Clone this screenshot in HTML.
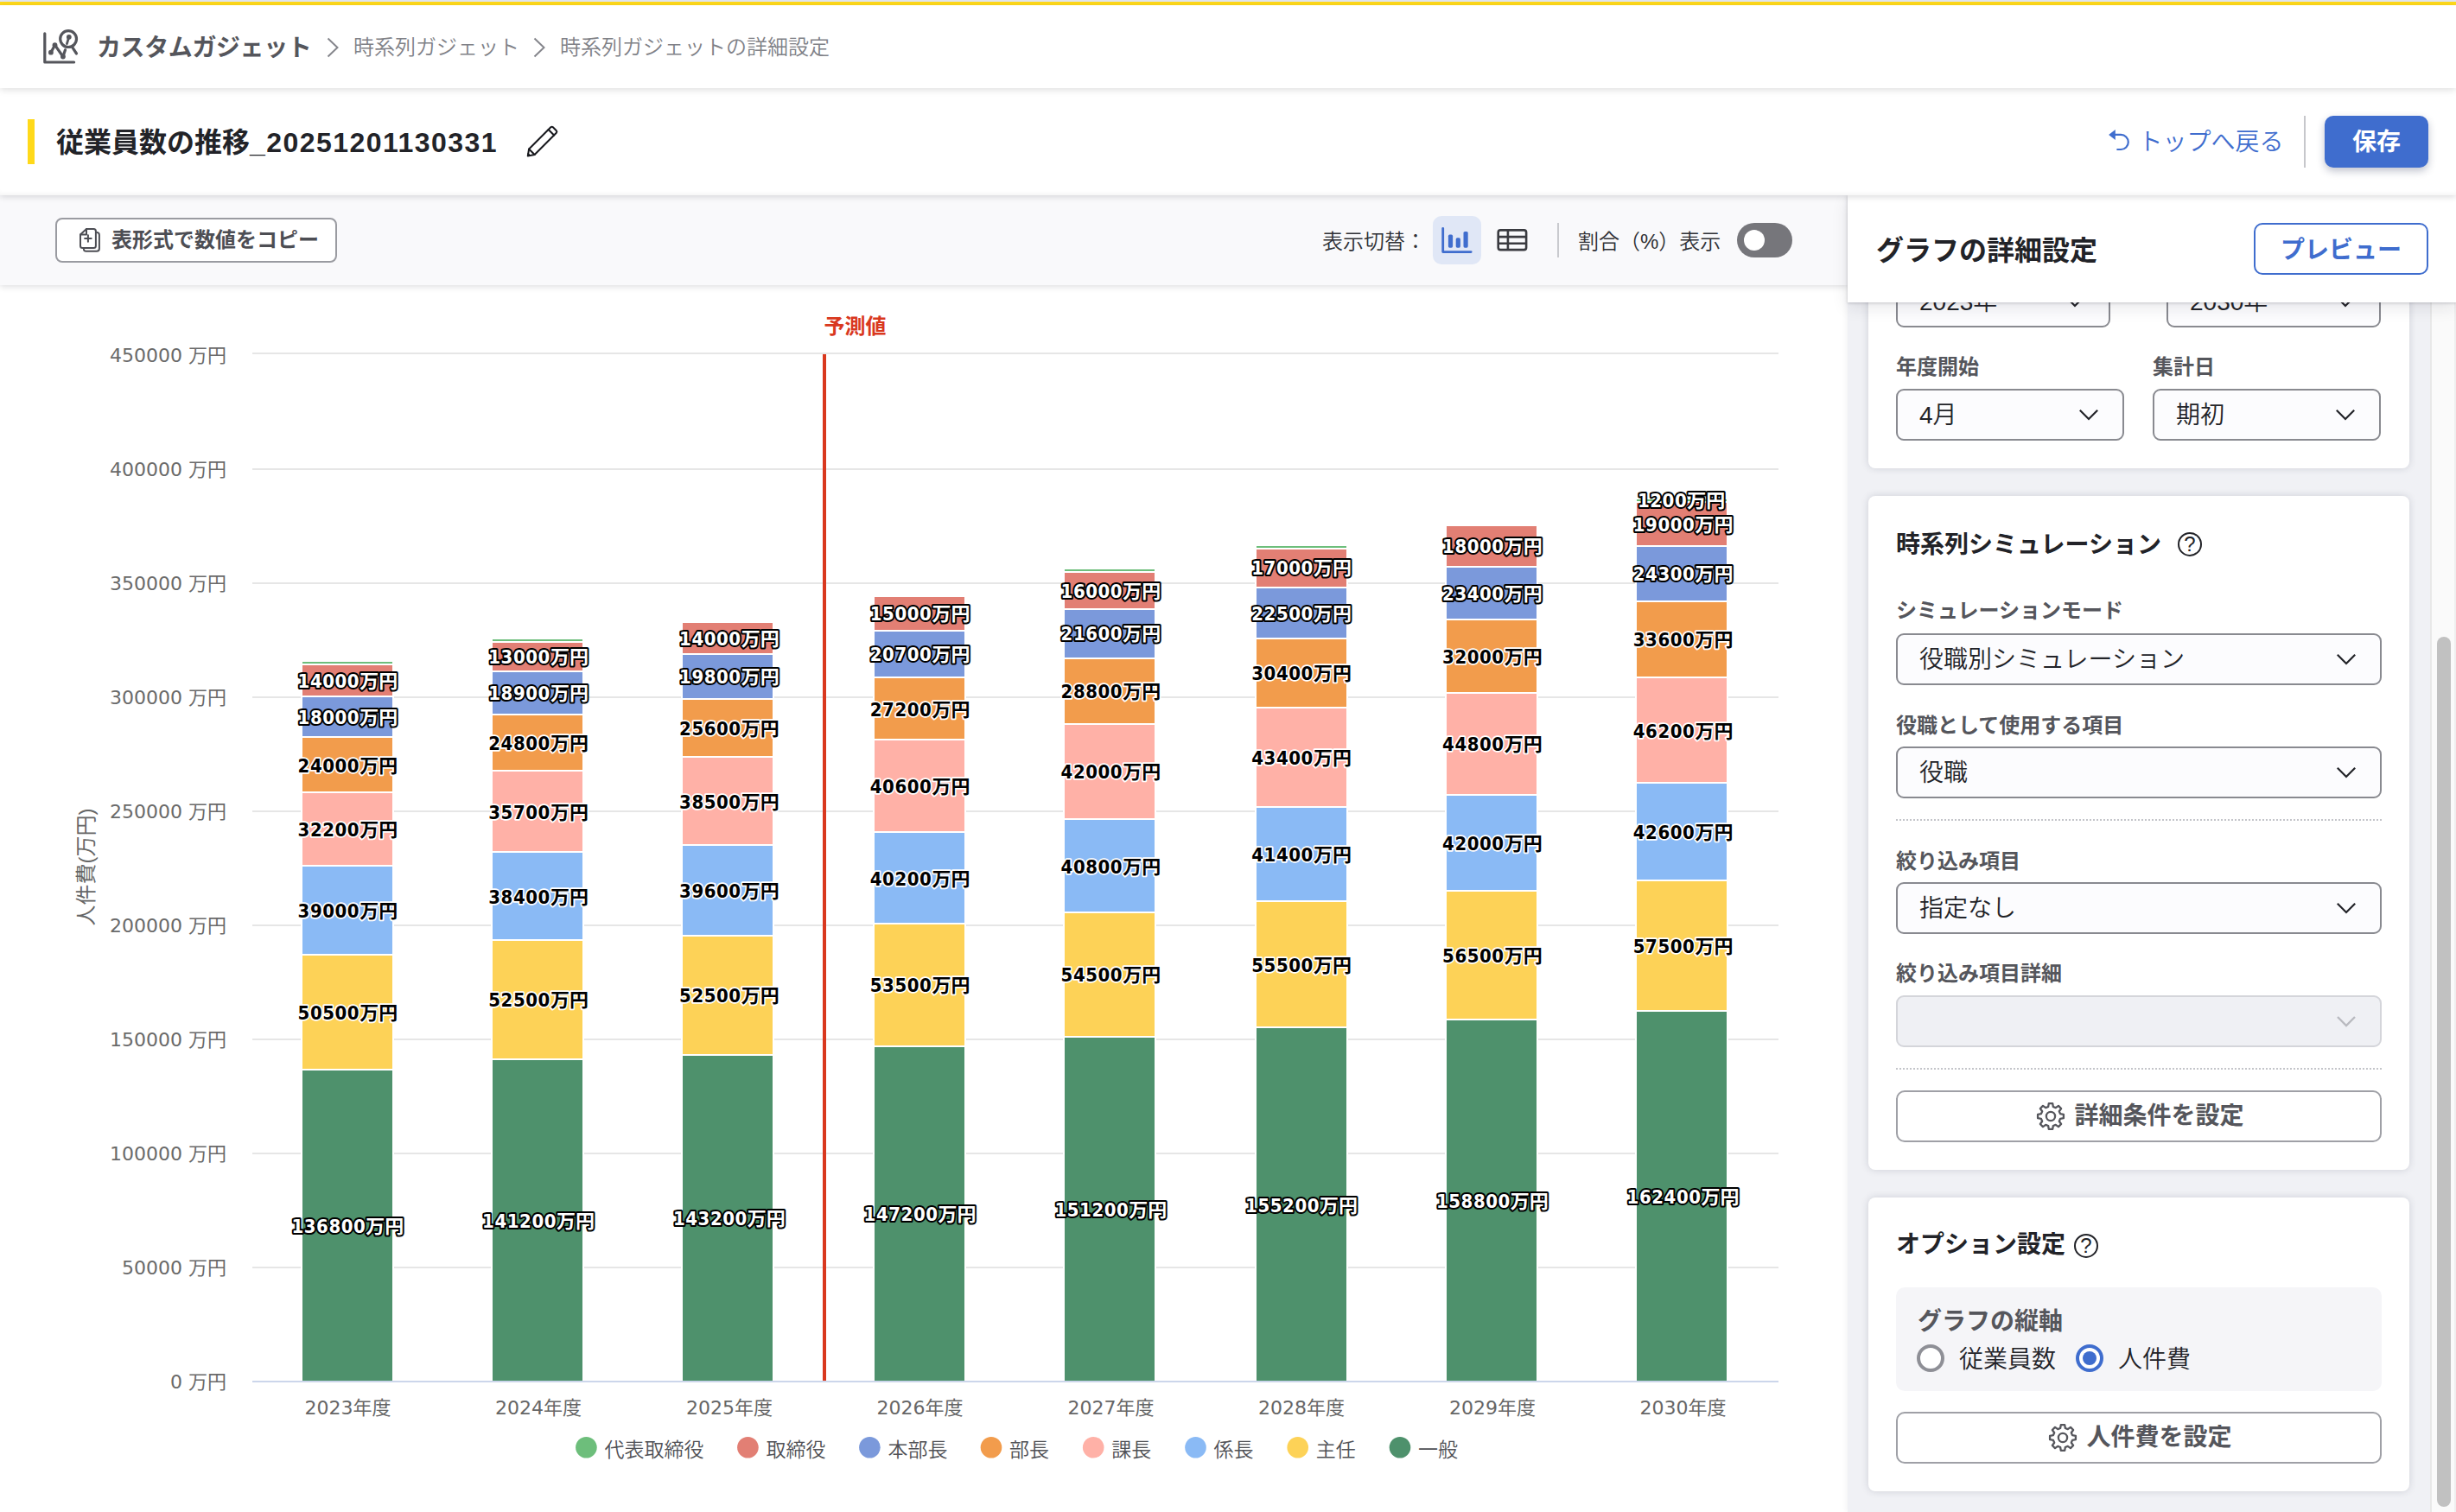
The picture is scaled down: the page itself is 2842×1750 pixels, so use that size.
<!DOCTYPE html>
<html lang="ja">
<head>
<meta charset="utf-8">
<title>カスタムガジェット - 時系列ガジェットの詳細設定</title>
<style>
*{box-sizing:border-box;margin:0;padding:0}
html,body{width:2842px;height:1750px;overflow:hidden;background:#fff}
body{position:relative;font-family:"Liberation Sans","Noto Sans CJK JP",sans-serif;color:#222328;-webkit-font-smoothing:antialiased}
.abs{position:absolute}
.t{position:absolute;white-space:nowrap;line-height:1}
/* top bars */
#top0{left:0;top:0;width:2842px;height:2px;background:#e1e5ed}
#top1{left:0;top:2px;width:2842px;height:4px;background:#ffd91a}
#header{left:0;top:6px;width:2842px;height:96px;background:#fff;box-shadow:0 2px 8px rgba(0,0,0,.13);z-index:30}
#titlebar{left:0;top:102px;width:2842px;height:124px;background:#fff;box-shadow:0 2px 7px rgba(10,10,20,.14),inset 0 -5px 5px -3px rgba(0,0,0,.045);z-index:20}
#toolbar{left:0;top:226px;width:2138px;height:104px;background:#f9f9fb;box-shadow:0 2px 7px rgba(10,10,20,.13);z-index:10}
#chart{left:0;top:330px;width:2138px;height:1420px;background:#fff;z-index:1}
#panel{left:2138px;top:226px;width:704px;height:1524px;background:#f0f1f5;z-index:12;box-shadow:-2px 0 5px rgba(30,30,50,.05)}
#phead{left:0;top:0;width:704px;height:124px;background:#fff;box-shadow:0 1px 3px rgba(30,30,50,.20),0 6px 18px rgba(30,30,50,.10);z-index:5}
.bc1{font-size:28px;font-weight:700;color:#55565c}
.bc2{font-size:24px;font-weight:350;color:#808187}
.title{font-size:32px;font-weight:700;color:#222328}
.card{position:absolute;left:24px;width:626px;background:#fff;border-radius:8px;box-shadow:0 0 8px rgba(40,45,70,.17)}
.lbl{font-size:24px;font-weight:700;color:#55565c}
.sel{position:absolute;height:60px;border:2px solid #898a90;border-radius:9px;background:#fcfcfe}
.sel .v{position:absolute;left:25px;top:15px;font-size:28px;line-height:1;white-space:nowrap;color:#222328;font-weight:350}
.sel svg{position:absolute;right:27px;top:21px}
.sel.dis{background:#eff0f4;border-color:#d4d5da}
.btn{position:absolute;height:60px;border:2px solid #9fa0a6;border-radius:10px;background:#fff}
.btn .v{position:absolute;font-size:28px;line-height:1;white-space:nowrap;color:#55565c;font-weight:700}
.dot{position:absolute;height:0;border-top:2px dotted #c4c5ca}
.h2{font-size:28px;font-weight:700;color:#222328}
</style>
</head>
<body>
<div id="top0" class="abs"></div>
<div id="top1" class="abs"></div>

<div id="header" class="abs">
  <svg class="abs" style="left:40px;top:20px" width="60" height="60" viewBox="40 26 60 60" fill="none" stroke="#55565c" stroke-width="3.2" stroke-linecap="round" stroke-linejoin="round">
    <path d="M51.8 38.8V72H85.6"/>
    <path d="M58.9 60.7L63.5 52.2L72.9 65.5L75.5 57.8"/>
    <circle cx="58.9" cy="60.7" r="2.9" fill="#55565c" stroke="none"/>
    <circle cx="63.5" cy="52.2" r="2.9" fill="#55565c" stroke="none"/>
    <circle cx="72.9" cy="65.5" r="2.9" fill="#55565c" stroke="none"/>
    <circle cx="79.1" cy="45.1" r="9.4"/>
    <path d="M84 55.2L88.5 62"/>
    <circle cx="79.8" cy="42.8" r="2.9" fill="#55565c" stroke="none"/>
    <path d="M79.4 44L77.4 50.6" stroke-width="2.8"/>
  </svg>
  <div class="t bc1" style="left:112px;top:36px;letter-spacing:-.4px">カスタムガジェット</div>
  <svg class="abs" style="left:376px;top:36px" width="18" height="26" viewBox="0 0 18 26" fill="none" stroke="#85868c" stroke-width="2"><path d="M3.5 2.5L14.5 13L3.5 23.5"/></svg>
  <div class="t bc2" style="left:409px;top:37px">時系列ガジェット</div>
  <svg class="abs" style="left:615px;top:36px" width="18" height="26" viewBox="0 0 18 26" fill="none" stroke="#85868c" stroke-width="2"><path d="M3.5 2.5L14.5 13L3.5 23.5"/></svg>
  <div class="t bc2" style="left:648px;top:37px">時系列ガジェットの詳細設定</div>
</div>

<div id="titlebar" class="abs">
  <div class="abs" style="left:32px;top:36px;width:8px;height:52px;background:#ffd91a"></div>
  <div class="t title" style="left:65px;top:47px">従業員数の推移<span style="letter-spacing:1.45px">_20251201130331</span></div>
  <svg class="abs" style="left:604px;top:40px" width="48" height="48" viewBox="604 142 48 48" fill="none" stroke="#17181d" stroke-width="2" stroke-linejoin="round" stroke-linecap="round">
    <path d="M612.100 172.500L637.300 147.300Q638.600 146.100 639.900 147.300L643.800 151.200Q645 152.500 643.800 153.800L618.600 179L610.800 180.500Z"/>
    <path d="M634.600 150L641.100 156.500"/>
    <path d="M612.100 172.500L618.600 179"/>
    <path d="M611.300 177.500L613.800 180L610.800 180.500Z" fill="#17181d" stroke-width="1"/>
  </svg>
  <svg class="abs" style="left:2436px;top:44px" width="32" height="32" viewBox="2436 146 32 32" fill="none" stroke="#3f6dce" stroke-width="2.200" stroke-linecap="butt">
    <path d="M2446 155.900H2454.250A8.550 8.550 0 0 1 2454.250 173H2449.400"/>
    <path d="M2440.100 155.900L2447.800 149.900V161.900Z" fill="#3f6dce" stroke="none"/>
  </svg>
  <div class="t" style="left:2474.600px;top:49px;font-size:28px;color:#3f6dce;font-weight:350;line-height:1">トップへ戻る</div>
  <div class="abs" style="left:2666px;top:32px;width:2px;height:60px;background:#c6c7cb"></div>
  <div class="abs" style="left:2690px;top:32px;width:120px;height:60px;background:#3f6dce;border-radius:10px;box-shadow:0 4px 10px rgba(30,40,80,.28)"></div>
  <div class="t" style="left:2722px;top:49px;font-size:28px;color:#fff;font-weight:700">保存</div>
</div>

<div id="toolbar" class="abs">
  <div class="btn" style="left:64px;top:26px;width:326px;height:52px;border-color:#9a9ba1;border-radius:8px">
    <svg class="abs" style="left:22px;top:6px" width="36" height="36" viewBox="88 260 36 36" fill="none" stroke="#4d4e54" stroke-width="2" stroke-linejoin="round" stroke-linecap="round">
      <path d="M100 265.100H108.400Q110.900 265.100 110.900 267.600V284.400Q110.900 286.900 108.400 286.900H95.500Q93 286.900 93 284.400V271.500Z"/>
      <path d="M100 265.100V271.500H93"/>
      <path d="M101.900 272.200V279.800M98.100 276H105.700"/>
      <path d="M112.300 269Q114.900 269.300 114.900 272V287.800Q114.900 290.800 111.900 290.800H99.500Q97.200 290.800 96.900 288.600"/>
    </svg>
    <div class="v" style="left:63px;top:12px;font-size:24px;color:#4d4e54">表形式で数値をコピー</div>
  </div>
  <div class="t" style="left:1530px;top:42px;font-size:24px;font-weight:350;color:#303136">表示切替：</div>
  <div class="abs" style="left:1658px;top:24px;width:56px;height:56px;border-radius:10px;background:#e0e7f6"></div>
  <svg class="abs" style="left:1664px;top:30px" width="44" height="44" viewBox="1664 256 44 44" fill="none" stroke="#3f6dce" stroke-width="2.800" stroke-linecap="round" stroke-linejoin="round">
    <path d="M1669.700 264.300V291.600H1702.200"/>
    <rect x="1675.900" y="271.600" width="5.200" height="15.100" rx="1.600" fill="#3f6dce" stroke="none"/>
    <rect x="1684.700" y="275.300" width="5.200" height="11.400" rx="1.600" fill="#3f6dce" stroke="none"/>
    <rect x="1693.500" y="267.900" width="5.200" height="18.800" rx="1.600" fill="#3f6dce" stroke="none"/>
  </svg>
  <svg class="abs" style="left:1726px;top:30px" width="48" height="44" viewBox="1726 256 48 44" fill="none" stroke="#3a3b40" stroke-width="2.600" stroke-linejoin="round">
    <rect x="1733.700" y="266.400" width="32.400" height="22.700" rx="2.600"/>
    <path d="M1733.700 274.100H1766.100M1733.700 281.700H1766.100M1744.900 266.400V289.100"/>
  </svg>
  <div class="abs" style="left:1802px;top:32px;width:2px;height:40px;background:#c9cace"></div>
  <div class="t" style="left:1826px;top:42px;font-size:24px;font-weight:350;color:#303136">割合（%）表示</div>
  <div class="abs" style="left:2010px;top:32px;width:64px;height:40px;border-radius:20px;background:#76767b"></div>
  <div class="abs" style="left:2018px;top:40px;width:24px;height:24px;border-radius:12px;background:#fff"></div>
</div>
<div id="chart" class="abs">
<svg class="abs" style="left:0;top:0" width="2138" height="1420" viewBox="0 330 2138 1420" font-family="DejaVu Sans, Noto Sans CJK JP, sans-serif">
<rect x="292" y="408" width="1766" height="2" fill="#e6e6e6"/>
<rect x="292" y="542" width="1766" height="2" fill="#e6e6e6"/>
<rect x="292" y="674" width="1766" height="2" fill="#e6e6e6"/>
<rect x="292" y="806" width="1766" height="2" fill="#e6e6e6"/>
<rect x="292" y="938" width="1766" height="2" fill="#e6e6e6"/>
<rect x="292" y="1070" width="1766" height="2" fill="#e6e6e6"/>
<rect x="292" y="1202" width="1766" height="2" fill="#e6e6e6"/>
<rect x="292" y="1334" width="1766" height="2" fill="#e6e6e6"/>
<rect x="292" y="1466" width="1766" height="2" fill="#e6e6e6"/>
<text x="262" y="1607.4" text-anchor="end" font-size="22" fill="#6a6a6a">0 万円</text>
<text x="262" y="1475.4" text-anchor="end" font-size="22" fill="#6a6a6a">50000 万円</text>
<text x="262" y="1343.4" text-anchor="end" font-size="22" fill="#6a6a6a">100000 万円</text>
<text x="262" y="1211.4" text-anchor="end" font-size="22" fill="#6a6a6a">150000 万円</text>
<text x="262" y="1079.4" text-anchor="end" font-size="22" fill="#6a6a6a">200000 万円</text>
<text x="262" y="947.4" text-anchor="end" font-size="22" fill="#6a6a6a">250000 万円</text>
<text x="262" y="815.4" text-anchor="end" font-size="22" fill="#6a6a6a">300000 万円</text>
<text x="262" y="683.4" text-anchor="end" font-size="22" fill="#6a6a6a">350000 万円</text>
<text x="262" y="551.4" text-anchor="end" font-size="22" fill="#6a6a6a">400000 万円</text>
<text x="262" y="419.4" text-anchor="end" font-size="22" fill="#6a6a6a">450000 万円</text>
<text transform="translate(107.500,1003.500) rotate(-90)" text-anchor="middle" font-size="24" fill="#666" font-family="Liberation Sans, Noto Sans CJK JP, sans-serif">人件費(万円)</text>
<rect x="349" y="1238" width="106" height="361" fill="#4e916c" stroke="#fff" stroke-width="2"/>
<rect x="349" y="1105" width="106" height="133" fill="#fdd257" stroke="#fff" stroke-width="2"/>
<rect x="349" y="1002" width="106" height="103" fill="#8abaf5" stroke="#fff" stroke-width="2"/>
<rect x="349" y="917" width="106" height="85" fill="#ffb1a7" stroke="#fff" stroke-width="2"/>
<rect x="349" y="853" width="106" height="64" fill="#f29c4c" stroke="#fff" stroke-width="2"/>
<rect x="349" y="806" width="106" height="47" fill="#7b99db" stroke="#fff" stroke-width="2"/>
<rect x="349" y="769" width="106" height="37" fill="#e27f74" stroke="#fff" stroke-width="2"/>
<rect x="349" y="765" width="106" height="4" fill="#6dbe7b" stroke="#fff" stroke-width="2"/>
<rect x="569" y="1226" width="106" height="373" fill="#4e916c" stroke="#fff" stroke-width="2"/>
<rect x="569" y="1088" width="106" height="138" fill="#fdd257" stroke="#fff" stroke-width="2"/>
<rect x="569" y="986" width="106" height="102" fill="#8abaf5" stroke="#fff" stroke-width="2"/>
<rect x="569" y="892" width="106" height="94" fill="#ffb1a7" stroke="#fff" stroke-width="2"/>
<rect x="569" y="827" width="106" height="65" fill="#f29c4c" stroke="#fff" stroke-width="2"/>
<rect x="569" y="777" width="106" height="50" fill="#7b99db" stroke="#fff" stroke-width="2"/>
<rect x="569" y="743" width="106" height="34" fill="#e27f74" stroke="#fff" stroke-width="2"/>
<rect x="569" y="739" width="106" height="4" fill="#6dbe7b" stroke="#fff" stroke-width="2"/>
<rect x="789" y="1221" width="106" height="378" fill="#4e916c" stroke="#fff" stroke-width="2"/>
<rect x="789" y="1083" width="106" height="138" fill="#fdd257" stroke="#fff" stroke-width="2"/>
<rect x="789" y="978" width="106" height="105" fill="#8abaf5" stroke="#fff" stroke-width="2"/>
<rect x="789" y="876" width="106" height="102" fill="#ffb1a7" stroke="#fff" stroke-width="2"/>
<rect x="789" y="809" width="106" height="67" fill="#f29c4c" stroke="#fff" stroke-width="2"/>
<rect x="789" y="757" width="106" height="52" fill="#7b99db" stroke="#fff" stroke-width="2"/>
<rect x="789" y="720" width="106" height="37" fill="#e27f74" stroke="#fff" stroke-width="2"/>
<rect x="1011" y="1211" width="106" height="388" fill="#4e916c" stroke="#fff" stroke-width="2"/>
<rect x="1011" y="1069" width="106" height="142" fill="#fdd257" stroke="#fff" stroke-width="2"/>
<rect x="1011" y="963" width="106" height="106" fill="#8abaf5" stroke="#fff" stroke-width="2"/>
<rect x="1011" y="856" width="106" height="107" fill="#ffb1a7" stroke="#fff" stroke-width="2"/>
<rect x="1011" y="784" width="106" height="72" fill="#f29c4c" stroke="#fff" stroke-width="2"/>
<rect x="1011" y="730" width="106" height="54" fill="#7b99db" stroke="#fff" stroke-width="2"/>
<rect x="1011" y="690" width="106" height="40" fill="#e27f74" stroke="#fff" stroke-width="2"/>
<rect x="1231" y="1200" width="106" height="399" fill="#4e916c" stroke="#fff" stroke-width="2"/>
<rect x="1231" y="1056" width="106" height="144" fill="#fdd257" stroke="#fff" stroke-width="2"/>
<rect x="1231" y="948" width="106" height="108" fill="#8abaf5" stroke="#fff" stroke-width="2"/>
<rect x="1231" y="838" width="106" height="110" fill="#ffb1a7" stroke="#fff" stroke-width="2"/>
<rect x="1231" y="762" width="106" height="76" fill="#f29c4c" stroke="#fff" stroke-width="2"/>
<rect x="1231" y="705" width="106" height="57" fill="#7b99db" stroke="#fff" stroke-width="2"/>
<rect x="1231" y="662" width="106" height="43" fill="#e27f74" stroke="#fff" stroke-width="2"/>
<rect x="1231" y="658" width="106" height="4" fill="#6dbe7b" stroke="#fff" stroke-width="2"/>
<rect x="1453" y="1189" width="106" height="410" fill="#4e916c" stroke="#fff" stroke-width="2"/>
<rect x="1453" y="1043" width="106" height="146" fill="#fdd257" stroke="#fff" stroke-width="2"/>
<rect x="1453" y="934" width="106" height="109" fill="#8abaf5" stroke="#fff" stroke-width="2"/>
<rect x="1453" y="819" width="106" height="115" fill="#ffb1a7" stroke="#fff" stroke-width="2"/>
<rect x="1453" y="739" width="106" height="80" fill="#f29c4c" stroke="#fff" stroke-width="2"/>
<rect x="1453" y="680" width="106" height="59" fill="#7b99db" stroke="#fff" stroke-width="2"/>
<rect x="1453" y="635" width="106" height="45" fill="#e27f74" stroke="#fff" stroke-width="2"/>
<rect x="1453" y="631" width="106" height="4" fill="#6dbe7b" stroke="#fff" stroke-width="2"/>
<rect x="1673" y="1180" width="106" height="419" fill="#4e916c" stroke="#fff" stroke-width="2"/>
<rect x="1673" y="1031" width="106" height="149" fill="#fdd257" stroke="#fff" stroke-width="2"/>
<rect x="1673" y="920" width="106" height="111" fill="#8abaf5" stroke="#fff" stroke-width="2"/>
<rect x="1673" y="802" width="106" height="118" fill="#ffb1a7" stroke="#fff" stroke-width="2"/>
<rect x="1673" y="717" width="106" height="85" fill="#f29c4c" stroke="#fff" stroke-width="2"/>
<rect x="1673" y="656" width="106" height="61" fill="#7b99db" stroke="#fff" stroke-width="2"/>
<rect x="1673" y="608" width="106" height="48" fill="#e27f74" stroke="#fff" stroke-width="2"/>
<rect x="1893" y="1170" width="106" height="429" fill="#4e916c" stroke="#fff" stroke-width="2"/>
<rect x="1893" y="1019" width="106" height="151" fill="#fdd257" stroke="#fff" stroke-width="2"/>
<rect x="1893" y="906" width="106" height="113" fill="#8abaf5" stroke="#fff" stroke-width="2"/>
<rect x="1893" y="784" width="106" height="122" fill="#ffb1a7" stroke="#fff" stroke-width="2"/>
<rect x="1893" y="696" width="106" height="88" fill="#f29c4c" stroke="#fff" stroke-width="2"/>
<rect x="1893" y="632" width="106" height="64" fill="#7b99db" stroke="#fff" stroke-width="2"/>
<rect x="1893" y="581" width="106" height="51" fill="#e27f74" stroke="#fff" stroke-width="2"/>
<rect x="1893" y="577" width="106" height="4" fill="#6dbe7b" stroke="#fff" stroke-width="2"/>
<rect x="292" y="1598" width="1766" height="2" fill="#ccd6eb"/>
<rect x="952.00" y="410" width="4" height="1188" fill="#d9381e"/>
<text x="953.4" y="386" font-size="24" font-weight="700" fill="#d9381e" font-family="Liberation Sans, Noto Sans CJK JP, sans-serif">予測値</text>
<text x="402.4" y="1636.500" text-anchor="middle" font-size="22" fill="#666">2023年度</text>
<text x="623.1" y="1636.500" text-anchor="middle" font-size="22" fill="#666">2024年度</text>
<text x="843.9" y="1636.500" text-anchor="middle" font-size="22" fill="#666">2025年度</text>
<text x="1064.6" y="1636.500" text-anchor="middle" font-size="22" fill="#666">2026年度</text>
<text x="1285.4" y="1636.500" text-anchor="middle" font-size="22" fill="#666">2027年度</text>
<text x="1506.1" y="1636.500" text-anchor="middle" font-size="22" fill="#666">2028年度</text>
<text x="1726.9" y="1636.500" text-anchor="middle" font-size="22" fill="#666">2029年度</text>
<text x="1947.6" y="1636.500" text-anchor="middle" font-size="22" fill="#666">2030年度</text>
<text x="402.4" y="1426.8" text-anchor="middle" font-size="22" font-weight="700" fill="#fff" stroke="#000" stroke-width="4" stroke-linejoin="round" paint-order="stroke" font-family="DejaVu Sans Condensed, DejaVu Sans, Noto Sans CJK JP, sans-serif" letter-spacing="0.55"><tspan>136800</tspan><tspan letter-spacing="0">万円</tspan></text>
<text x="402.4" y="1179.7" text-anchor="middle" font-size="22" font-weight="700" fill="#000" stroke="#fff" stroke-width="3.4" stroke-linejoin="round" paint-order="stroke" font-family="DejaVu Sans Condensed, DejaVu Sans, Noto Sans CJK JP, sans-serif" letter-spacing="0.55"><tspan>50500</tspan><tspan letter-spacing="0">万円</tspan></text>
<text x="402.4" y="1061.6" text-anchor="middle" font-size="22" font-weight="700" fill="#000" stroke="#fff" stroke-width="3.4" stroke-linejoin="round" paint-order="stroke" font-family="DejaVu Sans Condensed, DejaVu Sans, Noto Sans CJK JP, sans-serif" letter-spacing="0.55"><tspan>39000</tspan><tspan letter-spacing="0">万円</tspan></text>
<text x="402.4" y="967.6" text-anchor="middle" font-size="22" font-weight="700" fill="#000" stroke="#fff" stroke-width="3.4" stroke-linejoin="round" paint-order="stroke" font-family="DejaVu Sans Condensed, DejaVu Sans, Noto Sans CJK JP, sans-serif" letter-spacing="0.55"><tspan>32200</tspan><tspan letter-spacing="0">万円</tspan></text>
<text x="402.4" y="893.5" text-anchor="middle" font-size="22" font-weight="700" fill="#000" stroke="#fff" stroke-width="3.4" stroke-linejoin="round" paint-order="stroke" font-family="DejaVu Sans Condensed, DejaVu Sans, Noto Sans CJK JP, sans-serif" letter-spacing="0.55"><tspan>24000</tspan><tspan letter-spacing="0">万円</tspan></text>
<text x="402.4" y="838.0" text-anchor="middle" font-size="22" font-weight="700" fill="#fff" stroke="#000" stroke-width="4" stroke-linejoin="round" paint-order="stroke" font-family="DejaVu Sans Condensed, DejaVu Sans, Noto Sans CJK JP, sans-serif" letter-spacing="0.55"><tspan>18000</tspan><tspan letter-spacing="0">万円</tspan></text>
<text x="402.4" y="795.8" text-anchor="middle" font-size="22" font-weight="700" fill="#fff" stroke="#000" stroke-width="4" stroke-linejoin="round" paint-order="stroke" font-family="DejaVu Sans Condensed, DejaVu Sans, Noto Sans CJK JP, sans-serif" letter-spacing="0.55"><tspan>14000</tspan><tspan letter-spacing="0">万円</tspan></text>
<text x="623.1" y="1421.0" text-anchor="middle" font-size="22" font-weight="700" fill="#fff" stroke="#000" stroke-width="4" stroke-linejoin="round" paint-order="stroke" font-family="DejaVu Sans Condensed, DejaVu Sans, Noto Sans CJK JP, sans-serif" letter-spacing="0.55"><tspan>141200</tspan><tspan letter-spacing="0">万円</tspan></text>
<text x="623.1" y="1165.4" text-anchor="middle" font-size="22" font-weight="700" fill="#000" stroke="#fff" stroke-width="3.4" stroke-linejoin="round" paint-order="stroke" font-family="DejaVu Sans Condensed, DejaVu Sans, Noto Sans CJK JP, sans-serif" letter-spacing="0.55"><tspan>52500</tspan><tspan letter-spacing="0">万円</tspan></text>
<text x="623.1" y="1045.5" text-anchor="middle" font-size="22" font-weight="700" fill="#000" stroke="#fff" stroke-width="3.4" stroke-linejoin="round" paint-order="stroke" font-family="DejaVu Sans Condensed, DejaVu Sans, Noto Sans CJK JP, sans-serif" letter-spacing="0.55"><tspan>38400</tspan><tspan letter-spacing="0">万円</tspan></text>
<text x="623.1" y="947.7" text-anchor="middle" font-size="22" font-weight="700" fill="#000" stroke="#fff" stroke-width="3.4" stroke-linejoin="round" paint-order="stroke" font-family="DejaVu Sans Condensed, DejaVu Sans, Noto Sans CJK JP, sans-serif" letter-spacing="0.55"><tspan>35700</tspan><tspan letter-spacing="0">万円</tspan></text>
<text x="623.1" y="867.9" text-anchor="middle" font-size="22" font-weight="700" fill="#000" stroke="#fff" stroke-width="3.4" stroke-linejoin="round" paint-order="stroke" font-family="DejaVu Sans Condensed, DejaVu Sans, Noto Sans CJK JP, sans-serif" letter-spacing="0.55"><tspan>24800</tspan><tspan letter-spacing="0">万円</tspan></text>
<text x="623.1" y="810.2" text-anchor="middle" font-size="22" font-weight="700" fill="#fff" stroke="#000" stroke-width="4" stroke-linejoin="round" paint-order="stroke" font-family="DejaVu Sans Condensed, DejaVu Sans, Noto Sans CJK JP, sans-serif" letter-spacing="0.55"><tspan>18900</tspan><tspan letter-spacing="0">万円</tspan></text>
<text x="623.1" y="768.1" text-anchor="middle" font-size="22" font-weight="700" fill="#fff" stroke="#000" stroke-width="4" stroke-linejoin="round" paint-order="stroke" font-family="DejaVu Sans Condensed, DejaVu Sans, Noto Sans CJK JP, sans-serif" letter-spacing="0.55"><tspan>13000</tspan><tspan letter-spacing="0">万円</tspan></text>
<text x="843.9" y="1418.3" text-anchor="middle" font-size="22" font-weight="700" fill="#fff" stroke="#000" stroke-width="4" stroke-linejoin="round" paint-order="stroke" font-family="DejaVu Sans Condensed, DejaVu Sans, Noto Sans CJK JP, sans-serif" letter-spacing="0.55"><tspan>143200</tspan><tspan letter-spacing="0">万円</tspan></text>
<text x="843.9" y="1160.1" text-anchor="middle" font-size="22" font-weight="700" fill="#000" stroke="#fff" stroke-width="3.4" stroke-linejoin="round" paint-order="stroke" font-family="DejaVu Sans Condensed, DejaVu Sans, Noto Sans CJK JP, sans-serif" letter-spacing="0.55"><tspan>52500</tspan><tspan letter-spacing="0">万円</tspan></text>
<text x="843.9" y="1038.6" text-anchor="middle" font-size="22" font-weight="700" fill="#000" stroke="#fff" stroke-width="3.4" stroke-linejoin="round" paint-order="stroke" font-family="DejaVu Sans Condensed, DejaVu Sans, Noto Sans CJK JP, sans-serif" letter-spacing="0.55"><tspan>39600</tspan><tspan letter-spacing="0">万円</tspan></text>
<text x="843.9" y="935.5" text-anchor="middle" font-size="22" font-weight="700" fill="#000" stroke="#fff" stroke-width="3.4" stroke-linejoin="round" paint-order="stroke" font-family="DejaVu Sans Condensed, DejaVu Sans, Noto Sans CJK JP, sans-serif" letter-spacing="0.55"><tspan>38500</tspan><tspan letter-spacing="0">万円</tspan></text>
<text x="843.9" y="851.0" text-anchor="middle" font-size="22" font-weight="700" fill="#000" stroke="#fff" stroke-width="3.4" stroke-linejoin="round" paint-order="stroke" font-family="DejaVu Sans Condensed, DejaVu Sans, Noto Sans CJK JP, sans-serif" letter-spacing="0.55"><tspan>25600</tspan><tspan letter-spacing="0">万円</tspan></text>
<text x="843.9" y="791.1" text-anchor="middle" font-size="22" font-weight="700" fill="#fff" stroke="#000" stroke-width="4" stroke-linejoin="round" paint-order="stroke" font-family="DejaVu Sans Condensed, DejaVu Sans, Noto Sans CJK JP, sans-serif" letter-spacing="0.55"><tspan>19800</tspan><tspan letter-spacing="0">万円</tspan></text>
<text x="843.9" y="746.5" text-anchor="middle" font-size="22" font-weight="700" fill="#fff" stroke="#000" stroke-width="4" stroke-linejoin="round" paint-order="stroke" font-family="DejaVu Sans Condensed, DejaVu Sans, Noto Sans CJK JP, sans-serif" letter-spacing="0.55"><tspan>14000</tspan><tspan letter-spacing="0">万円</tspan></text>
<text x="1064.6" y="1413.1" text-anchor="middle" font-size="22" font-weight="700" fill="#fff" stroke="#000" stroke-width="4" stroke-linejoin="round" paint-order="stroke" font-family="DejaVu Sans Condensed, DejaVu Sans, Noto Sans CJK JP, sans-serif" letter-spacing="0.55"><tspan>147200</tspan><tspan letter-spacing="0">万円</tspan></text>
<text x="1064.6" y="1148.2" text-anchor="middle" font-size="22" font-weight="700" fill="#000" stroke="#fff" stroke-width="3.4" stroke-linejoin="round" paint-order="stroke" font-family="DejaVu Sans Condensed, DejaVu Sans, Noto Sans CJK JP, sans-serif" letter-spacing="0.55"><tspan>53500</tspan><tspan letter-spacing="0">万円</tspan></text>
<text x="1064.6" y="1024.6" text-anchor="middle" font-size="22" font-weight="700" fill="#000" stroke="#fff" stroke-width="3.4" stroke-linejoin="round" paint-order="stroke" font-family="DejaVu Sans Condensed, DejaVu Sans, Noto Sans CJK JP, sans-serif" letter-spacing="0.55"><tspan>40200</tspan><tspan letter-spacing="0">万円</tspan></text>
<text x="1064.6" y="918.0" text-anchor="middle" font-size="22" font-weight="700" fill="#000" stroke="#fff" stroke-width="3.4" stroke-linejoin="round" paint-order="stroke" font-family="DejaVu Sans Condensed, DejaVu Sans, Noto Sans CJK JP, sans-serif" letter-spacing="0.55"><tspan>40600</tspan><tspan letter-spacing="0">万円</tspan></text>
<text x="1064.6" y="828.5" text-anchor="middle" font-size="22" font-weight="700" fill="#000" stroke="#fff" stroke-width="3.4" stroke-linejoin="round" paint-order="stroke" font-family="DejaVu Sans Condensed, DejaVu Sans, Noto Sans CJK JP, sans-serif" letter-spacing="0.55"><tspan>27200</tspan><tspan letter-spacing="0">万円</tspan></text>
<text x="1064.6" y="765.3" text-anchor="middle" font-size="22" font-weight="700" fill="#fff" stroke="#000" stroke-width="4" stroke-linejoin="round" paint-order="stroke" font-family="DejaVu Sans Condensed, DejaVu Sans, Noto Sans CJK JP, sans-serif" letter-spacing="0.55"><tspan>20700</tspan><tspan letter-spacing="0">万円</tspan></text>
<text x="1064.6" y="718.2" text-anchor="middle" font-size="22" font-weight="700" fill="#fff" stroke="#000" stroke-width="4" stroke-linejoin="round" paint-order="stroke" font-family="DejaVu Sans Condensed, DejaVu Sans, Noto Sans CJK JP, sans-serif" letter-spacing="0.55"><tspan>15000</tspan><tspan letter-spacing="0">万円</tspan></text>
<text x="1285.4" y="1407.8" text-anchor="middle" font-size="22" font-weight="700" fill="#fff" stroke="#000" stroke-width="4" stroke-linejoin="round" paint-order="stroke" font-family="DejaVu Sans Condensed, DejaVu Sans, Noto Sans CJK JP, sans-serif" letter-spacing="0.55"><tspan>151200</tspan><tspan letter-spacing="0">万円</tspan></text>
<text x="1285.4" y="1136.4" text-anchor="middle" font-size="22" font-weight="700" fill="#000" stroke="#fff" stroke-width="3.4" stroke-linejoin="round" paint-order="stroke" font-family="DejaVu Sans Condensed, DejaVu Sans, Noto Sans CJK JP, sans-serif" letter-spacing="0.55"><tspan>54500</tspan><tspan letter-spacing="0">万円</tspan></text>
<text x="1285.4" y="1010.6" text-anchor="middle" font-size="22" font-weight="700" fill="#000" stroke="#fff" stroke-width="3.4" stroke-linejoin="round" paint-order="stroke" font-family="DejaVu Sans Condensed, DejaVu Sans, Noto Sans CJK JP, sans-serif" letter-spacing="0.55"><tspan>40800</tspan><tspan letter-spacing="0">万円</tspan></text>
<text x="1285.4" y="901.4" text-anchor="middle" font-size="22" font-weight="700" fill="#000" stroke="#fff" stroke-width="3.4" stroke-linejoin="round" paint-order="stroke" font-family="DejaVu Sans Condensed, DejaVu Sans, Noto Sans CJK JP, sans-serif" letter-spacing="0.55"><tspan>42000</tspan><tspan letter-spacing="0">万円</tspan></text>
<text x="1285.4" y="807.9" text-anchor="middle" font-size="22" font-weight="700" fill="#000" stroke="#fff" stroke-width="3.4" stroke-linejoin="round" paint-order="stroke" font-family="DejaVu Sans Condensed, DejaVu Sans, Noto Sans CJK JP, sans-serif" letter-spacing="0.55"><tspan>28800</tspan><tspan letter-spacing="0">万円</tspan></text>
<text x="1285.4" y="741.4" text-anchor="middle" font-size="22" font-weight="700" fill="#fff" stroke="#000" stroke-width="4" stroke-linejoin="round" paint-order="stroke" font-family="DejaVu Sans Condensed, DejaVu Sans, Noto Sans CJK JP, sans-serif" letter-spacing="0.55"><tspan>21600</tspan><tspan letter-spacing="0">万円</tspan></text>
<text x="1285.4" y="691.8" text-anchor="middle" font-size="22" font-weight="700" fill="#fff" stroke="#000" stroke-width="4" stroke-linejoin="round" paint-order="stroke" font-family="DejaVu Sans Condensed, DejaVu Sans, Noto Sans CJK JP, sans-serif" letter-spacing="0.55"><tspan>16000</tspan><tspan letter-spacing="0">万円</tspan></text>
<text x="1506.1" y="1402.5" text-anchor="middle" font-size="22" font-weight="700" fill="#fff" stroke="#000" stroke-width="4" stroke-linejoin="round" paint-order="stroke" font-family="DejaVu Sans Condensed, DejaVu Sans, Noto Sans CJK JP, sans-serif" letter-spacing="0.55"><tspan>155200</tspan><tspan letter-spacing="0">万円</tspan></text>
<text x="1506.1" y="1124.5" text-anchor="middle" font-size="22" font-weight="700" fill="#000" stroke="#fff" stroke-width="3.4" stroke-linejoin="round" paint-order="stroke" font-family="DejaVu Sans Condensed, DejaVu Sans, Noto Sans CJK JP, sans-serif" letter-spacing="0.55"><tspan>55500</tspan><tspan letter-spacing="0">万円</tspan></text>
<text x="1506.1" y="996.6" text-anchor="middle" font-size="22" font-weight="700" fill="#000" stroke="#fff" stroke-width="3.4" stroke-linejoin="round" paint-order="stroke" font-family="DejaVu Sans Condensed, DejaVu Sans, Noto Sans CJK JP, sans-serif" letter-spacing="0.55"><tspan>41400</tspan><tspan letter-spacing="0">万円</tspan></text>
<text x="1506.1" y="884.7" text-anchor="middle" font-size="22" font-weight="700" fill="#000" stroke="#fff" stroke-width="3.4" stroke-linejoin="round" paint-order="stroke" font-family="DejaVu Sans Condensed, DejaVu Sans, Noto Sans CJK JP, sans-serif" letter-spacing="0.55"><tspan>43400</tspan><tspan letter-spacing="0">万円</tspan></text>
<text x="1506.1" y="787.4" text-anchor="middle" font-size="22" font-weight="700" fill="#000" stroke="#fff" stroke-width="3.4" stroke-linejoin="round" paint-order="stroke" font-family="DejaVu Sans Condensed, DejaVu Sans, Noto Sans CJK JP, sans-serif" letter-spacing="0.55"><tspan>30400</tspan><tspan letter-spacing="0">万円</tspan></text>
<text x="1506.1" y="717.6" text-anchor="middle" font-size="22" font-weight="700" fill="#fff" stroke="#000" stroke-width="4" stroke-linejoin="round" paint-order="stroke" font-family="DejaVu Sans Condensed, DejaVu Sans, Noto Sans CJK JP, sans-serif" letter-spacing="0.55"><tspan>22500</tspan><tspan letter-spacing="0">万円</tspan></text>
<text x="1506.1" y="665.4" text-anchor="middle" font-size="22" font-weight="700" fill="#fff" stroke="#000" stroke-width="4" stroke-linejoin="round" paint-order="stroke" font-family="DejaVu Sans Condensed, DejaVu Sans, Noto Sans CJK JP, sans-serif" letter-spacing="0.55"><tspan>17000</tspan><tspan letter-spacing="0">万円</tspan></text>
<text x="1726.9" y="1397.8" text-anchor="middle" font-size="22" font-weight="700" fill="#fff" stroke="#000" stroke-width="4" stroke-linejoin="round" paint-order="stroke" font-family="DejaVu Sans Condensed, DejaVu Sans, Noto Sans CJK JP, sans-serif" letter-spacing="0.55"><tspan>158800</tspan><tspan letter-spacing="0">万円</tspan></text>
<text x="1726.9" y="1113.7" text-anchor="middle" font-size="22" font-weight="700" fill="#000" stroke="#fff" stroke-width="3.4" stroke-linejoin="round" paint-order="stroke" font-family="DejaVu Sans Condensed, DejaVu Sans, Noto Sans CJK JP, sans-serif" letter-spacing="0.55"><tspan>56500</tspan><tspan letter-spacing="0">万円</tspan></text>
<text x="1726.9" y="983.7" text-anchor="middle" font-size="22" font-weight="700" fill="#000" stroke="#fff" stroke-width="3.4" stroke-linejoin="round" paint-order="stroke" font-family="DejaVu Sans Condensed, DejaVu Sans, Noto Sans CJK JP, sans-serif" letter-spacing="0.55"><tspan>42000</tspan><tspan letter-spacing="0">万円</tspan></text>
<text x="1726.9" y="869.2" text-anchor="middle" font-size="22" font-weight="700" fill="#000" stroke="#fff" stroke-width="3.4" stroke-linejoin="round" paint-order="stroke" font-family="DejaVu Sans Condensed, DejaVu Sans, Noto Sans CJK JP, sans-serif" letter-spacing="0.55"><tspan>44800</tspan><tspan letter-spacing="0">万円</tspan></text>
<text x="1726.9" y="767.8" text-anchor="middle" font-size="22" font-weight="700" fill="#000" stroke="#fff" stroke-width="3.4" stroke-linejoin="round" paint-order="stroke" font-family="DejaVu Sans Condensed, DejaVu Sans, Noto Sans CJK JP, sans-serif" letter-spacing="0.55"><tspan>32000</tspan><tspan letter-spacing="0">万円</tspan></text>
<text x="1726.9" y="694.7" text-anchor="middle" font-size="22" font-weight="700" fill="#fff" stroke="#000" stroke-width="4" stroke-linejoin="round" paint-order="stroke" font-family="DejaVu Sans Condensed, DejaVu Sans, Noto Sans CJK JP, sans-serif" letter-spacing="0.55"><tspan>23400</tspan><tspan letter-spacing="0">万円</tspan></text>
<text x="1726.9" y="640.1" text-anchor="middle" font-size="22" font-weight="700" fill="#fff" stroke="#000" stroke-width="4" stroke-linejoin="round" paint-order="stroke" font-family="DejaVu Sans Condensed, DejaVu Sans, Noto Sans CJK JP, sans-serif" letter-spacing="0.55"><tspan>18000</tspan><tspan letter-spacing="0">万円</tspan></text>
<text x="1947.6" y="1393.0" text-anchor="middle" font-size="22" font-weight="700" fill="#fff" stroke="#000" stroke-width="4" stroke-linejoin="round" paint-order="stroke" font-family="DejaVu Sans Condensed, DejaVu Sans, Noto Sans CJK JP, sans-serif" letter-spacing="0.55"><tspan>162400</tspan><tspan letter-spacing="0">万円</tspan></text>
<text x="1947.6" y="1102.9" text-anchor="middle" font-size="22" font-weight="700" fill="#000" stroke="#fff" stroke-width="3.4" stroke-linejoin="round" paint-order="stroke" font-family="DejaVu Sans Condensed, DejaVu Sans, Noto Sans CJK JP, sans-serif" letter-spacing="0.55"><tspan>57500</tspan><tspan letter-spacing="0">万円</tspan></text>
<text x="1947.6" y="970.8" text-anchor="middle" font-size="22" font-weight="700" fill="#000" stroke="#fff" stroke-width="3.4" stroke-linejoin="round" paint-order="stroke" font-family="DejaVu Sans Condensed, DejaVu Sans, Noto Sans CJK JP, sans-serif" letter-spacing="0.55"><tspan>42600</tspan><tspan letter-spacing="0">万円</tspan></text>
<text x="1947.6" y="853.6" text-anchor="middle" font-size="22" font-weight="700" fill="#000" stroke="#fff" stroke-width="3.4" stroke-linejoin="round" paint-order="stroke" font-family="DejaVu Sans Condensed, DejaVu Sans, Noto Sans CJK JP, sans-serif" letter-spacing="0.55"><tspan>46200</tspan><tspan letter-spacing="0">万円</tspan></text>
<text x="1947.6" y="748.3" text-anchor="middle" font-size="22" font-weight="700" fill="#000" stroke="#fff" stroke-width="3.4" stroke-linejoin="round" paint-order="stroke" font-family="DejaVu Sans Condensed, DejaVu Sans, Noto Sans CJK JP, sans-serif" letter-spacing="0.55"><tspan>33600</tspan><tspan letter-spacing="0">万円</tspan></text>
<text x="1947.6" y="671.9" text-anchor="middle" font-size="22" font-weight="700" fill="#fff" stroke="#000" stroke-width="4" stroke-linejoin="round" paint-order="stroke" font-family="DejaVu Sans Condensed, DejaVu Sans, Noto Sans CJK JP, sans-serif" letter-spacing="0.55"><tspan>24300</tspan><tspan letter-spacing="0">万円</tspan></text>
<text x="1947.6" y="614.8" text-anchor="middle" font-size="22" font-weight="700" fill="#fff" stroke="#000" stroke-width="4" stroke-linejoin="round" paint-order="stroke" font-family="DejaVu Sans Condensed, DejaVu Sans, Noto Sans CJK JP, sans-serif" letter-spacing="0.55"><tspan>19000</tspan><tspan letter-spacing="0">万円</tspan></text>
<text x="1945.6" y="586.6" text-anchor="middle" font-size="22" font-weight="700" fill="#fff" stroke="#000" stroke-width="4" stroke-linejoin="round" paint-order="stroke" font-family="DejaVu Sans Condensed, DejaVu Sans, Noto Sans CJK JP, sans-serif" letter-spacing="0.55"><tspan>1200</tspan><tspan letter-spacing="0">万円</tspan></text>
<circle cx="678.4" cy="1675.200" r="12.300" fill="#6dbe7b"/>
<text x="699.4" y="1685.700" font-size="23" font-weight="350" fill="#505156" font-family="Liberation Sans, Noto Sans CJK JP, sans-serif">代表取締役</text>
<circle cx="865.4" cy="1675.200" r="12.300" fill="#e27f74"/>
<text x="886.4" y="1685.700" font-size="23" font-weight="350" fill="#505156" font-family="Liberation Sans, Noto Sans CJK JP, sans-serif">取締役</text>
<circle cx="1006.4" cy="1675.200" r="12.300" fill="#7b99db"/>
<text x="1027.4" y="1685.700" font-size="23" font-weight="350" fill="#505156" font-family="Liberation Sans, Noto Sans CJK JP, sans-serif">本部長</text>
<circle cx="1147" cy="1675.200" r="12.300" fill="#f29c4c"/>
<text x="1168" y="1685.700" font-size="23" font-weight="350" fill="#505156" font-family="Liberation Sans, Noto Sans CJK JP, sans-serif">部長</text>
<circle cx="1265.2" cy="1675.200" r="12.300" fill="#ffb1a7"/>
<text x="1286.2" y="1685.700" font-size="23" font-weight="350" fill="#505156" font-family="Liberation Sans, Noto Sans CJK JP, sans-serif">課長</text>
<circle cx="1383.5" cy="1675.200" r="12.300" fill="#8abaf5"/>
<text x="1404.5" y="1685.700" font-size="23" font-weight="350" fill="#505156" font-family="Liberation Sans, Noto Sans CJK JP, sans-serif">係長</text>
<circle cx="1501.7" cy="1675.200" r="12.300" fill="#fdd257"/>
<text x="1522.7" y="1685.700" font-size="23" font-weight="350" fill="#505156" font-family="Liberation Sans, Noto Sans CJK JP, sans-serif">主任</text>
<circle cx="1620" cy="1675.200" r="12.300" fill="#4e916c"/>
<text x="1641" y="1685.700" font-size="23" font-weight="350" fill="#505156" font-family="Liberation Sans, Noto Sans CJK JP, sans-serif">一般</text>
</svg>
</div>
<div id="panel" class="abs">
  <div id="phead" class="abs">
    <div class="t title" style="left:33px;top:47.500px">グラフの詳細設定</div>
    <div class="abs" style="left:470px;top:32px;width:202px;height:60px;border:2px solid #3f6dce;border-radius:10px;background:#fff"></div>
    <div class="t" style="left:501px;top:49.500px;font-size:28px;font-weight:700;color:#3f6dce">プレビュー</div>
  </div>

  <!-- card 1 -->
  <div class="card" style="top:20px;height:296px">
    <div class="sel" style="left:32px;top:73.400px;width:248px"><div class="v">2023年</div>
      <svg width="24" height="14" viewBox="0 0 24 14" fill="none" stroke="#222328" stroke-width="2.200"><path d="M1.800 1.800L12 12L22.200 1.800"/></svg></div>
    <div class="t" style="left:298px;top:88px;font-size:28px;color:#303136">〜</div>
    <div class="sel" style="left:345px;top:73.400px;width:248px"><div class="v">2030年</div>
      <svg width="24" height="14" viewBox="0 0 24 14" fill="none" stroke="#222328" stroke-width="2.200"><path d="M1.800 1.800L12 12L22.200 1.800"/></svg></div>
    <div class="t lbl" style="left:32px;top:167px">年度開始</div>
    <div class="t lbl" style="left:329px;top:167px">集計日</div>
    <div class="sel" style="left:32px;top:204px;width:264px"><div class="v">4月</div>
      <svg width="24" height="14" viewBox="0 0 24 14" fill="none" stroke="#222328" stroke-width="2.200"><path d="M1.800 1.800L12 12L22.200 1.800"/></svg></div>
    <div class="sel" style="left:329px;top:204px;width:264px"><div class="v">期初</div>
      <svg width="24" height="14" viewBox="0 0 24 14" fill="none" stroke="#222328" stroke-width="2.200"><path d="M1.800 1.800L12 12L22.200 1.800"/></svg></div>
  </div>

  <!-- card 2 -->
  <div class="card" style="top:348px;height:780px">
    <div class="t h2" style="left:32px;top:43px">時系列シミュレーション</div>
    <svg class="abs" style="left:356px;top:40px" width="32" height="32" viewBox="0 0 32 32" fill="none" stroke="#222328" stroke-width="2"><circle cx="16" cy="15.900" r="13"/><text x="16" y="24.400" text-anchor="middle" font-size="24" font-family="Liberation Sans, sans-serif" fill="#222328" stroke="none">?</text></svg>
    <div class="t lbl" style="left:32px;top:121px">シミュレーションモード</div>
    <div class="sel" style="left:32px;top:159px;width:562px"><div class="v">役職別シミュレーション</div>
      <svg width="24" height="14" viewBox="0 0 24 14" fill="none" stroke="#222328" stroke-width="2.200"><path d="M1.800 1.800L12 12L22.200 1.800"/></svg></div>
    <div class="t lbl" style="left:32px;top:253.500px">役職として使用する項目</div>
    <div class="sel" style="left:32px;top:290px;width:562px"><div class="v">役職</div>
      <svg width="24" height="14" viewBox="0 0 24 14" fill="none" stroke="#222328" stroke-width="2.200"><path d="M1.800 1.800L12 12L22.200 1.800"/></svg></div>
    <div class="dot" style="left:32px;top:374px;width:562px"></div>
    <div class="t lbl" style="left:32px;top:411px">絞り込み項目</div>
    <div class="sel" style="left:32px;top:447px;width:562px"><div class="v">指定なし</div>
      <svg width="24" height="14" viewBox="0 0 24 14" fill="none" stroke="#222328" stroke-width="2.200"><path d="M1.800 1.800L12 12L22.200 1.800"/></svg></div>
    <div class="t lbl" style="left:32px;top:541px">絞り込み項目詳細</div>
    <div class="sel dis" style="left:32px;top:578px;width:562px">
      <svg width="24" height="14" viewBox="0 0 24 14" fill="none" stroke="#b9babf" stroke-width="2.4"><path d="M2 2L12 12L22 2"/></svg></div>
    <div class="dot" style="left:32px;top:662px;width:562px"></div>
    <div class="btn" style="left:32px;top:688px;width:562px">
      <svg class="abs" style="left:157px;top:7.800px" width="40" height="40" viewBox="0 0 40 40"><use href="#gear"/></svg>
      <div class="v" style="left:204.500px;top:13.800px">詳細条件を設定</div>
    </div>
  </div>

  <!-- card 3 -->
  <div class="card" style="top:1160px;height:340px">
    <div class="t h2" style="left:32px;top:41px">オプション設定</div>
    <svg class="abs" style="left:236px;top:40px" width="32" height="32" viewBox="0 0 32 32" fill="none" stroke="#222328" stroke-width="2"><circle cx="16" cy="15.900" r="13"/><text x="16" y="24.400" text-anchor="middle" font-size="24" font-family="Liberation Sans, sans-serif" fill="#222328" stroke="none">?</text></svg>
    <div class="abs" style="left:32px;top:104px;width:562px;height:120px;border-radius:10px;background:#f5f5f8"></div>
    <div class="t" style="left:57px;top:129.500px;font-size:28px;font-weight:700;color:#55565c">グラフの縦軸</div>
    <div class="abs" style="left:56px;top:170px;width:32px;height:32px;border-radius:16px;border:4px solid #8e8f96;background:#fff"></div>
    <div class="t" style="left:105px;top:174px;font-size:28px;font-weight:350;color:#222328">従業員数</div>
    <div class="abs" style="left:240px;top:170px;width:32px;height:32px;border-radius:16px;border:4px solid #3f6dce;background:#fff"></div>
    <div class="abs" style="left:248px;top:178px;width:16px;height:16px;border-radius:8px;background:#3f6dce"></div>
    <div class="t" style="left:289px;top:174px;font-size:28px;font-weight:350;color:#222328">人件費</div>
    <div class="btn" style="left:32px;top:248px;width:562px">
      <svg class="abs" style="left:170.800px;top:7.800px" width="40" height="40" viewBox="0 0 40 40"><use href="#gear"/></svg>
      <div class="v" style="left:218.500px;top:13.800px">人件費を設定</div>
    </div>
  </div>

  <!-- scrollbar -->
  <div class="abs" style="left:674px;top:124px;width:30px;height:1400px;background:#fafafa;border-left:2px solid #e8e8e8;border-right:2px solid #efefef;z-index:4"></div>
  <div class="abs" style="left:682px;top:511px;width:16px;height:1007px;border-radius:8px;background:#c1c1c1;z-index:5"></div>
</div>

<svg width="0" height="0" style="position:absolute">
  <defs>
    <g id="gear" fill="none" stroke="#55565c" stroke-width="2.300" stroke-linejoin="round">
      <circle cx="20" cy="20" r="5.100"/>
      <path d="M17.15 8.96 L17.77 5.07 L22.23 5.07 L22.85 8.96 L25.79 10.18 L28.98 7.86 L32.14 11.02 L29.82 14.21 L31.04 17.15 L34.93 17.77 L34.93 22.23 L31.04 22.85 L29.82 25.79 L32.14 28.98 L28.98 32.14 L25.79 29.82 L22.85 31.04 L22.23 34.93 L17.77 34.93 L17.15 31.04 L14.21 29.82 L11.02 32.14 L7.86 28.98 L10.18 25.79 L8.96 22.85 L5.07 22.23 L5.07 17.77 L8.96 17.15 L10.18 14.21 L7.86 11.02 L11.02 7.86 L14.21 10.18Z"/>
    </g>
  </defs>
</svg>
</body></html>
